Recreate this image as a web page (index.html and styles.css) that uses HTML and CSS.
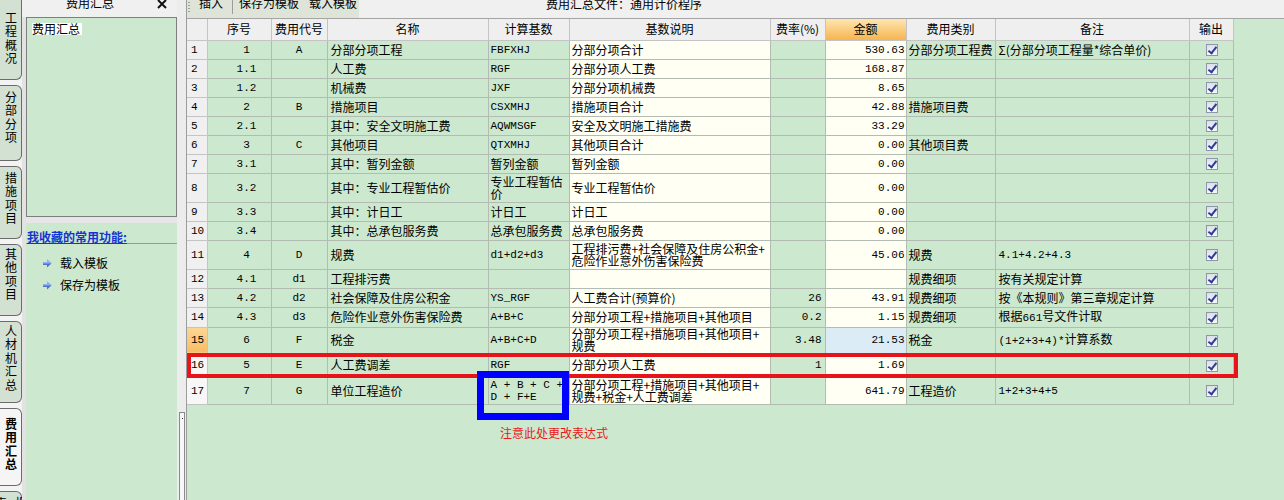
FILE: index.html
```html
<!DOCTYPE html>
<html lang="zh-CN">
<head>
<meta charset="utf-8">
<title>费用汇总</title>
<link rel="stylesheet" href="styles.css">
</head>
<body>
<div class="app">
  <nav class="tabs">
    <div class="tab t1"><span>工程概况</span></div>
    <div class="tab t2"><span>分部分项</span></div>
    <div class="tab t3"><span>措施项目</span></div>
    <div class="tab t4"><span>其他项目</span></div>
    <div class="tab t5"><span>人材机汇总</span></div>
    <div class="tab t6 active"><span>费用汇总</span></div>
    <div class="tab t7"><span>报表</span></div>
  </nav>

  <aside class="side">
    <div class="side-head">
      <span class="side-title">费用汇总</span>
      <svg class="close" width="10" height="10" viewBox="0 0 10 10"><path d="M1 1L9 9M9 1L1 9" stroke="#111" stroke-width="2"/></svg>
    </div>
    <div class="side-body">
      <div class="side-box"><span class="tree-item">费用汇总</span></div>
      <div class="side-sep"></div>
      <div class="fav">
        <div class="fav-title"><span>我收藏的常用功能:</span></div>
        <ul class="fav-list">
          <li><svg class="arrow" width="9" height="9" viewBox="0 0 9 9"><path d="M0 3H4V0.5L8.5 4.5L4 8.5V6H0Z" fill="#4a76d2"/><path d="M0 3H4V0.5L8.5 4.5H0Z" fill="#8fb0ec"/></svg><span>载入模板</span></li>
          <li><svg class="arrow" width="9" height="9" viewBox="0 0 9 9"><path d="M0 3H4V0.5L8.5 4.5L4 8.5V6H0Z" fill="#4a76d2"/><path d="M0 3H4V0.5L8.5 4.5H0Z" fill="#8fb0ec"/></svg><span>保存为模板</span></li>
        </ul>
      </div>
    </div>
  </aside>

  <div class="splitter"><div class="thumb"><span class="dot"></span></div></div>

  <main class="main">
    <div class="topbar">
      <div class="toolbar">
        <span class="grip"></span>
        <span class="tb-item">插入</span>
        <span class="tsep"></span>
        <span class="tb-item">保存为模板</span>
        <span class="tb-item gap">载入模板</span>
      </div>
      <div class="doc-title">费用汇总文件：通用计价程序</div>
    </div>

    <div class="grid-wrap">
      <table class="grid">
        <colgroup>
          <col class="c-rn"><col class="c-seq"><col class="c-code"><col class="c-name"><col class="c-base"><col class="c-desc"><col class="c-rate"><col class="c-amt"><col class="c-cat"><col class="c-memo"><col class="c-out">
        </colgroup>
        <thead>
          <tr class="hd">
            <th class="rn"></th><th>序号</th><th>费用代号</th><th>名称</th><th>计算基数</th><th>基数说明</th><th>费率(%)</th><th class="hot">金额</th><th>费用类别</th><th>备注</th><th>输出</th>
          </tr>
        </thead>
        <tbody>
          <tr class="h19"><td class="rn m">1</td><td class="seq m">1</td><td class="code m">A</td><td class="name">分部分项工程</td><td class="base m">FBFXHJ</td><td class="desc">分部分项合计</td><td class="rate m"></td><td class="amt m">530.63</td><td class="cat">分部分项工程费</td><td class="memo">Σ(分部分项工程量*综合单价)</td><td class="out"><span class="cb"></span></td></tr>
          <tr class="h19"><td class="rn m">2</td><td class="seq m">1.1</td><td class="code m"></td><td class="name">人工费</td><td class="base m">RGF</td><td class="desc">分部分项人工费</td><td class="rate m"></td><td class="amt m">168.87</td><td class="cat"></td><td class="memo"></td><td class="out"><span class="cb"></span></td></tr>
          <tr class="h19"><td class="rn m">3</td><td class="seq m">1.2</td><td class="code m"></td><td class="name">机械费</td><td class="base m">JXF</td><td class="desc">分部分项机械费</td><td class="rate m"></td><td class="amt m">8.65</td><td class="cat"></td><td class="memo"></td><td class="out"><span class="cb"></span></td></tr>
          <tr class="h19"><td class="rn m">4</td><td class="seq m">2</td><td class="code m">B</td><td class="name">措施项目</td><td class="base m">CSXMHJ</td><td class="desc">措施项目合计</td><td class="rate m"></td><td class="amt m">42.88</td><td class="cat">措施项目费</td><td class="memo"></td><td class="out"><span class="cb"></span></td></tr>
          <tr class="h19"><td class="rn m">5</td><td class="seq m">2.1</td><td class="code m"></td><td class="name">其中：安全文明施工费</td><td class="base m">AQWMSGF</td><td class="desc">安全及文明施工措施费</td><td class="rate m"></td><td class="amt m">33.29</td><td class="cat"></td><td class="memo"></td><td class="out"><span class="cb"></span></td></tr>
          <tr class="h19"><td class="rn m">6</td><td class="seq m">3</td><td class="code m">C</td><td class="name">其他项目</td><td class="base m">QTXMHJ</td><td class="desc">其他项目合计</td><td class="rate m"></td><td class="amt m">0.00</td><td class="cat">其他项目费</td><td class="memo"></td><td class="out"><span class="cb"></span></td></tr>
          <tr class="h19"><td class="rn m">7</td><td class="seq m">3.1</td><td class="code m"></td><td class="name">其中：暂列金额</td><td class="base">暂列金额</td><td class="desc">暂列金额</td><td class="rate m"></td><td class="amt m">0.00</td><td class="cat"></td><td class="memo"></td><td class="out"><span class="cb"></span></td></tr>
          <tr class="h29"><td class="rn m">8</td><td class="seq m">3.2</td><td class="code m"></td><td class="name">其中：专业工程暂估价</td><td class="base">专业工程暂估<br>价</td><td class="desc">专业工程暂估价</td><td class="rate m"></td><td class="amt m">0.00</td><td class="cat"></td><td class="memo"></td><td class="out"><span class="cb"></span></td></tr>
          <tr class="h19"><td class="rn m">9</td><td class="seq m">3.3</td><td class="code m"></td><td class="name">其中：计日工</td><td class="base">计日工</td><td class="desc">计日工</td><td class="rate m"></td><td class="amt m">0.00</td><td class="cat"></td><td class="memo"></td><td class="out"><span class="cb"></span></td></tr>
          <tr class="h19"><td class="rn m">10</td><td class="seq m">3.4</td><td class="code m"></td><td class="name">其中：总承包服务费</td><td class="base">总承包服务费</td><td class="desc">总承包服务费</td><td class="rate m"></td><td class="amt m">0.00</td><td class="cat"></td><td class="memo"></td><td class="out"><span class="cb"></span></td></tr>
          <tr class="h29"><td class="rn m">11</td><td class="seq m">4</td><td class="code m">D</td><td class="name">规费</td><td class="base m">d1+d2+d3</td><td class="desc">工程排污费+社会保障及住房公积金+<br>危险作业意外伤害保险费</td><td class="rate m"></td><td class="amt m">45.06</td><td class="cat">规费</td><td class="memo m">4.1+4.2+4.3</td><td class="out"><span class="cb"></span></td></tr>
          <tr class="h19"><td class="rn m">12</td><td class="seq m">4.1</td><td class="code m">d1</td><td class="name">工程排污费</td><td class="base m"></td><td class="desc"></td><td class="rate m"></td><td class="amt m"></td><td class="cat">规费细项</td><td class="memo">按有关规定计算</td><td class="out"><span class="cb"></span></td></tr>
          <tr class="h19"><td class="rn m">13</td><td class="seq m">4.2</td><td class="code m">d2</td><td class="name">社会保障及住房公积金</td><td class="base m">YS_RGF</td><td class="desc">人工费合计(预算价)</td><td class="rate m">26</td><td class="amt m">43.91</td><td class="cat">规费细项</td><td class="memo">按《本规则》第三章规定计算</td><td class="out"><span class="cb"></span></td></tr>
          <tr class="h20"><td class="rn m">14</td><td class="seq m">4.3</td><td class="code m">d3</td><td class="name">危险作业意外伤害保险费</td><td class="base m">A+B+C</td><td class="desc">分部分项工程+措施项目+其他项目</td><td class="rate m">0.2</td><td class="amt m">1.15</td><td class="cat">规费细项</td><td class="memo">根据<span class="m">661</span>号文件计取</td><td class="out"><span class="cb"></span></td></tr>
          <tr class="h26"><td class="rn m cur">15</td><td class="seq m">6</td><td class="code m">F</td><td class="name">税金</td><td class="base m">A+B+C+D</td><td class="desc">分部分项工程+措施项目+其他项目+<br>规费</td><td class="rate m">3.48</td><td class="amt m sel">21.53</td><td class="cat">税金</td><td class="memo"><span class="m">(1+2+3+4)*</span>计算系数</td><td class="out"><span class="cb"></span></td></tr>
          <tr class="h24"><td class="rn m lite">16</td><td class="seq m">5</td><td class="code m">E</td><td class="name">人工费调差</td><td class="base m">RGF</td><td class="desc">分部分项人工费</td><td class="rate m">1</td><td class="amt m">1.69</td><td class="cat"></td><td class="memo"></td><td class="out"><span class="cb"></span></td></tr>
          <tr class="h27"><td class="rn m lite">17</td><td class="seq m">7</td><td class="code m">G</td><td class="name">单位工程造价</td><td class="base m">A + B + C +<br>D + F+E</td><td class="desc">分部分项工程+措施项目+其他项目+<br>规费+税金+人工费调差</td><td class="rate m"></td><td class="amt m">641.79</td><td class="cat">工程造价</td><td class="memo m">1+2+3+4+5</td><td class="out"><span class="cb"></span></td></tr>
        </tbody>
      </table>
      <div class="mark-red"></div>
      <div class="mark-blue"></div>
      <div class="note">注意此处更改表达式</div>
    </div>
  </main>
</div>
</body>
</html>
```
FILE: styles.css
```css
* { box-sizing: border-box; margin: 0; padding: 0; }
html, body { width: 1284px; height: 500px; overflow: hidden; }
body {
  font-family: "Noto Sans CJK SC", "Noto Sans", sans-serif;
  font-size: 12px;
  color: #000;
  background: #cce8cf;
}
.m { font-family: "Liberation Mono", "Noto Sans CJK SC", monospace; font-size: 11px; }

.app { display: flex; height: 500px; }

/* vertical tabs */
.tabs {
  width: 22px; flex: none;
  background: #f3f3f3;
  display: flex; flex-direction: column; gap: 5px;
  overflow: hidden;
}
.tab {
  flex: none; width: 22px;
  background: #d2e1d2;
  border: 1px solid #6c6c6c; border-left: none;
  border-radius: 0 6px 6px 0;
  display: flex; justify-content: center;
  padding-top: 5px;
}
.tab span { writing-mode: vertical-rl; letter-spacing: 1.5px; line-height: 20px; }
.t1 { height: 80px; padding-top: 12px; border-top: none; border-radius: 0 0 6px 0; }
.t2 { height: 76px; }
.t3 { height: 73px; }
.t4 { height: 72px; padding-top: 3px; }
.t5 { height: 82px; padding-top: 3px; }
.t6 { height: 78px; padding-top: 9px; }
.t7 { height: 30px; }
.tab.active { background: #f4f5f4; font-weight: bold; }

/* side panel */
.side { width: 155px; flex: none; display: flex; flex-direction: column; }
.side-head {
  height: 17px; flex: none; background: #f0f0f0;
  display: flex; align-items: flex-start;
}
.side-title { margin-left: 44px; margin-top: -3px; line-height: 12px; }
.close { margin-left: auto; margin-right: 10px; margin-top: -1px; }
.side-body {
  flex: 1; display: flex; flex-direction: column;
  padding-left: 4px; background: #e2e2e2;
}
.side-box {
  height: 200px; flex: none;
  border: 1px solid #7e7e7e;
  background: #cce8cf;
  padding: 2px 5px 0;
}
.tree-item { display: inline-block; background: #fff; line-height: 12px; height: 12px; padding: 0 2px 0 0; }
.side-sep { height: 6px; flex: none; background: #e6e6e6; }
.fav { flex: 1; background: #cce8cf; padding-top: 8px; }
.fav-title {
  line-height: 12px; padding-left: 1px;
  border-bottom: 1px solid #9a9a9a;
}
.fav-title span { color: #1534cf; font-weight: bold; text-decoration: underline; }
.fav-list { list-style: none; padding-left: 17px; margin-top: 13px; display: flex; flex-direction: column; gap: 10px; }
.fav-list li { display: flex; align-items: center; gap: 8px; line-height: 12px; }

/* splitter */
.splitter { width: 9px; flex: none; background: #ececec; }
.thumb {
  margin-top: 412px; margin-left: 2px;
  width: 6px; height: 100px;
  border: 1px solid #8a8a8a; background: #f7f7f7;
  display: flex; justify-content: center;
}
.dot { width: 1px; height: 1px; background: #333; margin-top: 5px; }

/* main */
.main { flex: 1; border-left: 1px solid #9c9c9c; display: flex; flex-direction: column; min-width: 0; }
.topbar {
  height: 19px; flex: none;
  border-bottom: 1px solid #a4a4a4;
  background: #f0f0f0;
  display: flex; align-items: stretch;
}
.toolbar {
  display: flex; align-items: flex-start;
  background: #dee5d8;
  padding-left: 1px; padding-right: 2px;
}
.grip { width: 2px; height: 12px; margin-top: 2px; margin-right: 9px;
  background: repeating-linear-gradient(#9aa394 0 1px, transparent 1px 3px); }
.tb-item { line-height: 12px; margin-top: -3px; }
.tb-item.gap { margin-left: 10px; }
.tsep { width: 1px; height: 14px; background: #9c9c9c; margin: 0 6px 0 9px; }
.doc-title { padding-left: 187px; line-height: 12px; margin-top: -2px; }

.grid-wrap { flex: 1; position: relative; background: #cce8cf; }
.grid { border-collapse: collapse; table-layout: fixed; width: 1046px; }
.c-rn { width: 20px; } .c-seq { width: 64px; } .c-code { width: 56px; } .c-name { width: 161px; }
.c-base { width: 81px; } .c-desc { width: 201px; } .c-rate { width: 55px; } .c-amt { width: 81px; }
.c-cat { width: 89px; } .c-memo { width: 194px; } .c-out { width: 44px; }

.grid th, .grid td {
  border: 1px solid #b2bcb3;
  padding: 0 2px;
  white-space: nowrap; overflow: hidden;
  line-height: 12px; vertical-align: middle;
  text-align: left;
  background: #cce8cf;
}
.grid th { background: #efefef; font-weight: normal; text-align: center; border-color: #c4c4c4; border-top: none; }
.grid tr > :first-child { border-left: none; }
.grid th.hot { background: linear-gradient(#fde6b3, #f6b44e); }
.hd { height: 21px; }
.h19 { height: 19px; } .h20 { height: 20px; } .h24 { height: 24px; }
.h26 { height: 26px; } .h27 { height: 27px; } .h29 { height: 29px; }

.grid td.rn { background: #f0f0f0; padding-left: 4px; border-color: #c4c4c4; }
.grid td.rn.lite { background: #f7f7f7; }
.grid td.rn.cur { background: linear-gradient(#fcd694, #f7bd66); }
.grid td.seq { text-align: center; padding-left: 17px; }
.grid td.code { text-align: center; }
.grid td.name { padding-left: 3px; }
.grid td.base { padding-left: 2px; }
.grid td.desc { background: #fffff3; padding-left: 2px; }
.grid td.rate { text-align: right; padding-right: 3px; }
.grid td.amt { background: #fffff3; text-align: right; padding-right: 1px; }
.grid td.amt.sel { background: #dcecf6; }
.grid td.cat { padding-left: 2px; }
.grid td.memo { padding-left: 3px; }
.grid td.out { text-align: center; padding: 0; }

.cb {
  display: inline-block; position: relative; vertical-align: middle;
  width: 12px; height: 12px;
  border: 1px solid #8e97aa;
  background: linear-gradient(#dce0ea, #f6f7fa);
  margin-left: 2px;
}
.cb::after {
  content: ""; position: absolute;
  left: 3px; top: 0px; width: 3px; height: 7px;
  border: solid #2d3d92; border-width: 0 2px 2px 0;
  transform: rotate(38deg);
}

/* annotations */
.mark-red {
  position: absolute; left: 0; top: 334px;
  width: 1051px; height: 25px;
  border: 4px solid #e8141c;
}
.mark-blue {
  position: absolute; left: 290px; top: 352px;
  width: 92px; height: 49px;
  border: 7px solid #0000ff;
}
.note {
  position: absolute; left: 313px; top: 408px;
  color: #e81818; line-height: 12px;
}
```
